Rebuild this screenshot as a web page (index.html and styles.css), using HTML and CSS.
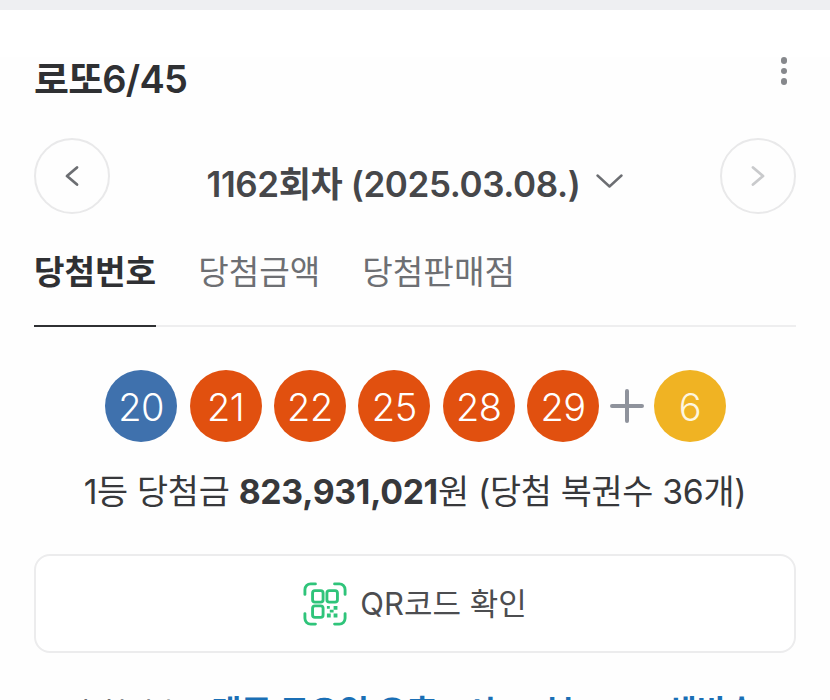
FILE: index.html
```html
<!DOCTYPE html>
<html lang="ko">
<head>
<meta charset="utf-8">
<title>로또6/45</title>
<link rel="stylesheet" href="styles.css">
</head>
<body>
<div class="topbar"></div>
<main class="card">
  <header class="head">
    <h1 class="title">로또6/45</h1>
    <span class="more"><i></i><i></i><i></i></span>
  </header>
  <div class="round">
    <span class="nav">
      <svg width="16" height="24" viewBox="0 0 16 24"><path d="M13 3.500L3 12l10 8.500" class="nav-l"/></svg>
    </span>
    <div class="round-label">
      <span>1162회차 (2025.03.08.)</span>
      <svg width="27" height="14" viewBox="0 0 27 14"><path d="M1.500 1.500L13.500 12.500 25.500 1.500" class="chev"/></svg>
    </div>
    <span class="nav">
      <svg width="16" height="24" viewBox="0 0 16 24"><path d="M3 3.500L13 12 3 20.500" class="nav-r"/></svg>
    </span>
  </div>
  <nav class="tabs">
    <a class="tab active">당첨번호</a>
    <a class="tab">당첨금액</a>
    <a class="tab">당첨판매점</a>
  </nav>
  <div class="balls">
    <span class="ball blue">20</span>
    <span class="ball red">21</span>
    <span class="ball red">22</span>
    <span class="ball red">25</span>
    <span class="ball red">28</span>
    <span class="ball red">29</span>
    <svg class="plus" width="36" height="36" viewBox="0 0 36 36"><path d="M2 18h30M17 3v30"/></svg>
    <span class="ball yellow">6</span>
  </div>
  <p class="prize">1등 당첨금 <b>823,931,021</b>원 (당첨 복권수 36개)</p>
  <button class="qr">
    <svg width="44" height="44" viewBox="0 0 46 46" class="qr-icon">
      <path d="M2 13V8a6 6 0 0 1 6-6h5M33 2h5a6 6 0 0 1 6 6v5M2 33v5a6 6 0 0 0 6 6h5M33 44h5a6 6 0 0 0 6-6v-5" class="qr-frame"/>
      <rect x="10" y="9" width="11" height="12" rx="2.500" class="qr-box"/>
      <rect x="25" y="9" width="11" height="12" rx="2.500" class="qr-box"/>
      <rect x="10" y="25" width="11" height="12" rx="2.500" class="qr-box"/>
      <path d="M25 25h3v3h-3zM32 25h4v4h-4zM28 29h4v3h-4zM25 33h4v4h-4zM32 33h4v4h-4z" class="qr-dots"/>
    </svg>
    <span class="qr-text">QR코드 확인</span>
  </button>
  <p class="note"><span class="bullet"></span><span class="note-gray">추첨방송 :</span> <span class="note-blue">매주 토요일 오후 8시 35분 MBC 생방송</span></p>
</main>
</body>
</html>
```
FILE: styles.css
```css
* { box-sizing: border-box; }
html, body { margin: 0; padding: 0; background: #fff; height: 700px; overflow: hidden; }
body { font-family: Inter, "Noto Sans CJK KR", sans-serif; color: #333; }
.topbar { height: 10px; background: #eeeff2; }
.card { padding: 0 34px; background: #fefefe; }
.head { display: flex; justify-content: space-between; align-items: center; height: 44px; margin-top: 47px; }
.title { margin: 0; font-size: 38px; font-weight: 600; letter-spacing: -0.8px; color: #2f3033; line-height: 44px; }
.more { display: flex; flex-direction: column; gap: 4px; margin: -16px 9px 0 0; }
.more i { width: 6.500px; height: 6.500px; border-radius: 50%; background: #86888c; }
.round { display: flex; align-items: center; justify-content: space-between; margin-top: 37px; }
.nav { width: 76px; height: 76px; border: 2px solid #e9e9ea; border-radius: 50%; display: flex; align-items: center; justify-content: center; }
.nav-l, .nav-r, .chev { fill: none; stroke-width: 2.800; stroke-linecap: round; stroke-linejoin: round; }
.nav-l { stroke: #6c6e72; }
.nav-r { stroke: #c9cacc; }
.chev { stroke: #6c6e72; stroke-width: 2.400; }
.round-label { display: flex; align-items: center; gap: 16px; font-size: 35px; font-weight: 600; color: #46474a; letter-spacing: -0.4px; margin: 10px 0 0 0; }
.tabs { display: flex; gap: 42px; margin-top: 20px; border-bottom: 2px solid #eeeeef; height: 93px; }
.tab { font-size: 33.200px; color: #6d6f73; line-height: 40px; padding-top: 18px; height: 93px; font-weight: 400; }
.tab.active { color: #2f3033; font-weight: 700; border-bottom: 2px solid #2f3033; }
.balls { display: flex; align-items: center; justify-content: center; gap: 12.400px; margin-top: 43px; padding-left: 1px; }
.ball { width: 72px; height: 72px; border-radius: 50%; color: #fff; font-size: 38px; font-weight: 350; padding-top: 2px; display: flex; align-items: center; justify-content: center; letter-spacing: -0.5px; }
.blue { background: #3f71ad; }
.red { background: #e1500f; }
.yellow { background: #f0b323; color: #fdf6e0; }
.plus { fill: none; stroke: #8f939c; stroke-width: 4; stroke-linecap: round; margin: 0 -5px 0 -1px; }
.prize { margin: 28px 0 0; text-align: center; font-size: 33.800px; line-height: 44px; color: #37383b; letter-spacing: -0.3px; }
.prize b { font-weight: 700; }
.qr { display: flex; align-items: center; justify-content: center; gap: 13px; width: 100%; height: 99px; margin-top: 40px; background: #fff; border: 2px solid #ececed; border-radius: 16px; font-family: inherit; font-size: 31px; color: #4c4d50; }
.qr-text { margin-bottom: 5px; }
.qr-frame, .qr-box { fill: none; stroke: #2fc47a; stroke-width: 3; stroke-linecap: round; }
.qr-dots { fill: #2fc47a; }
.note { margin: 38px 0 0; font-size: 32.500px; white-space: nowrap; line-height: 44px; display: flex; align-items: center; }
.bullet { width: 7px; height: 7px; border-radius: 50%; background: #888; margin-right: 31px; }
.note-gray { color: #6d6f73; font-size: 30px; margin-right: 12px; }
.note-blue { color: #1a6fb5; font-weight: 600; }
```
